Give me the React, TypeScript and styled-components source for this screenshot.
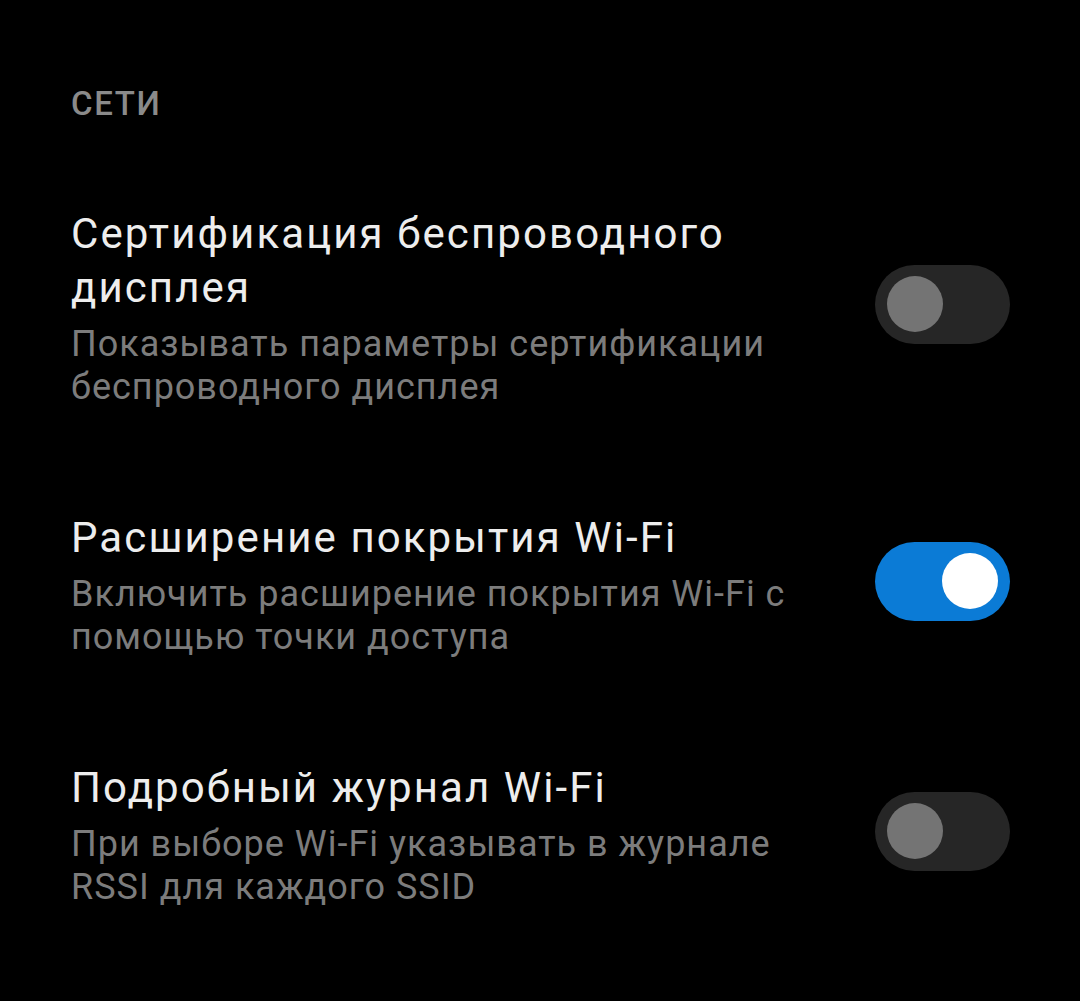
import React from 'react'
import styled, { createGlobalStyle } from 'styled-components'

const GlobalStyle = createGlobalStyle`
	html, body {
		margin: 0;
		padding: 0;
		background: #000;
	}
	body {
		font-family: Roboto, 'Noto Sans', 'Liberation Sans', sans-serif;
		-webkit-font-smoothing: antialiased;
	}
`

const Screen = styled.div`
	width: 1080px;
	height: 1001px;
	background: #000;
	padding: 84px 70px 0 71px;
	box-sizing: border-box;
	overflow: hidden;
`

const SectionTitle = styled.h3`
	margin: 0 0 32px;
	font-size: 33px;
	line-height: 40px;
	font-weight: 500;
	color: #8a8a8a;
	letter-spacing: 1.6px;
`

const Row = styled.div`
	display: flex;
	align-items: center;
	padding: 51px 0;
`

const Texts = styled.div`
	flex: 1;
	min-width: 0;
	padding-right: 50px;
`

const Title = styled.div`
	font-size: 42px;
	line-height: 54px;
	letter-spacing: 2.1px;
	color: #ededed;
`

const Summary = styled.div`
	margin-top: 8px;
	font-size: 36px;
	line-height: 43px;
	letter-spacing: 1px;
	color: #7c7c7c;
`

const Track = styled.div<{ $on: boolean }>`
	flex: none;
	width: 135px;
	height: 79px;
	margin-bottom: 8px;
	border-radius: 40px;
	background: ${p => (p.$on ? '#0b7bd6' : '#262626')};
	display: flex;
	align-items: center;
	justify-content: ${p => (p.$on ? 'flex-end' : 'flex-start')};
	padding: 0 12px;
	box-sizing: border-box;
`

const Knob = styled.div<{ $on: boolean }>`
	width: 56px;
	height: 56px;
	border-radius: 50%;
	background: ${p => (p.$on ? '#ffffff' : '#747474')};
`

type Item = { title: string; summary: string; on: boolean }

const items: Item[] = [
	{
		title: 'Сертификация беспроводного дисплея',
		summary: 'Показывать параметры сертификации беспроводного дисплея',
		on: false,
	},
	{
		title: 'Расширение покрытия Wi-Fi',
		summary: 'Включить расширение покрытия Wi-Fi с помощью точки доступа',
		on: true,
	},
	{
		title: 'Подробный журнал Wi-Fi',
		summary: 'При выборе Wi-Fi указывать в журнале RSSI для каждого SSID',
		on: false,
	},
]

const Toggle: React.FC<{ on: boolean }> = ({ on }) => (
	<Track $on={on}>
		<Knob $on={on} />
	</Track>
)

export default function App() {
	return (
		<>
			<GlobalStyle />
			<Screen>
				<SectionTitle>СЕТИ</SectionTitle>
				{items.map(item => (
					<Row key={item.title}>
						<Texts>
							<Title>{item.title}</Title>
							<Summary>{item.summary}</Summary>
						</Texts>
						<Toggle on={item.on} />
					</Row>
				))}
			</Screen>
		</>
	)
}
